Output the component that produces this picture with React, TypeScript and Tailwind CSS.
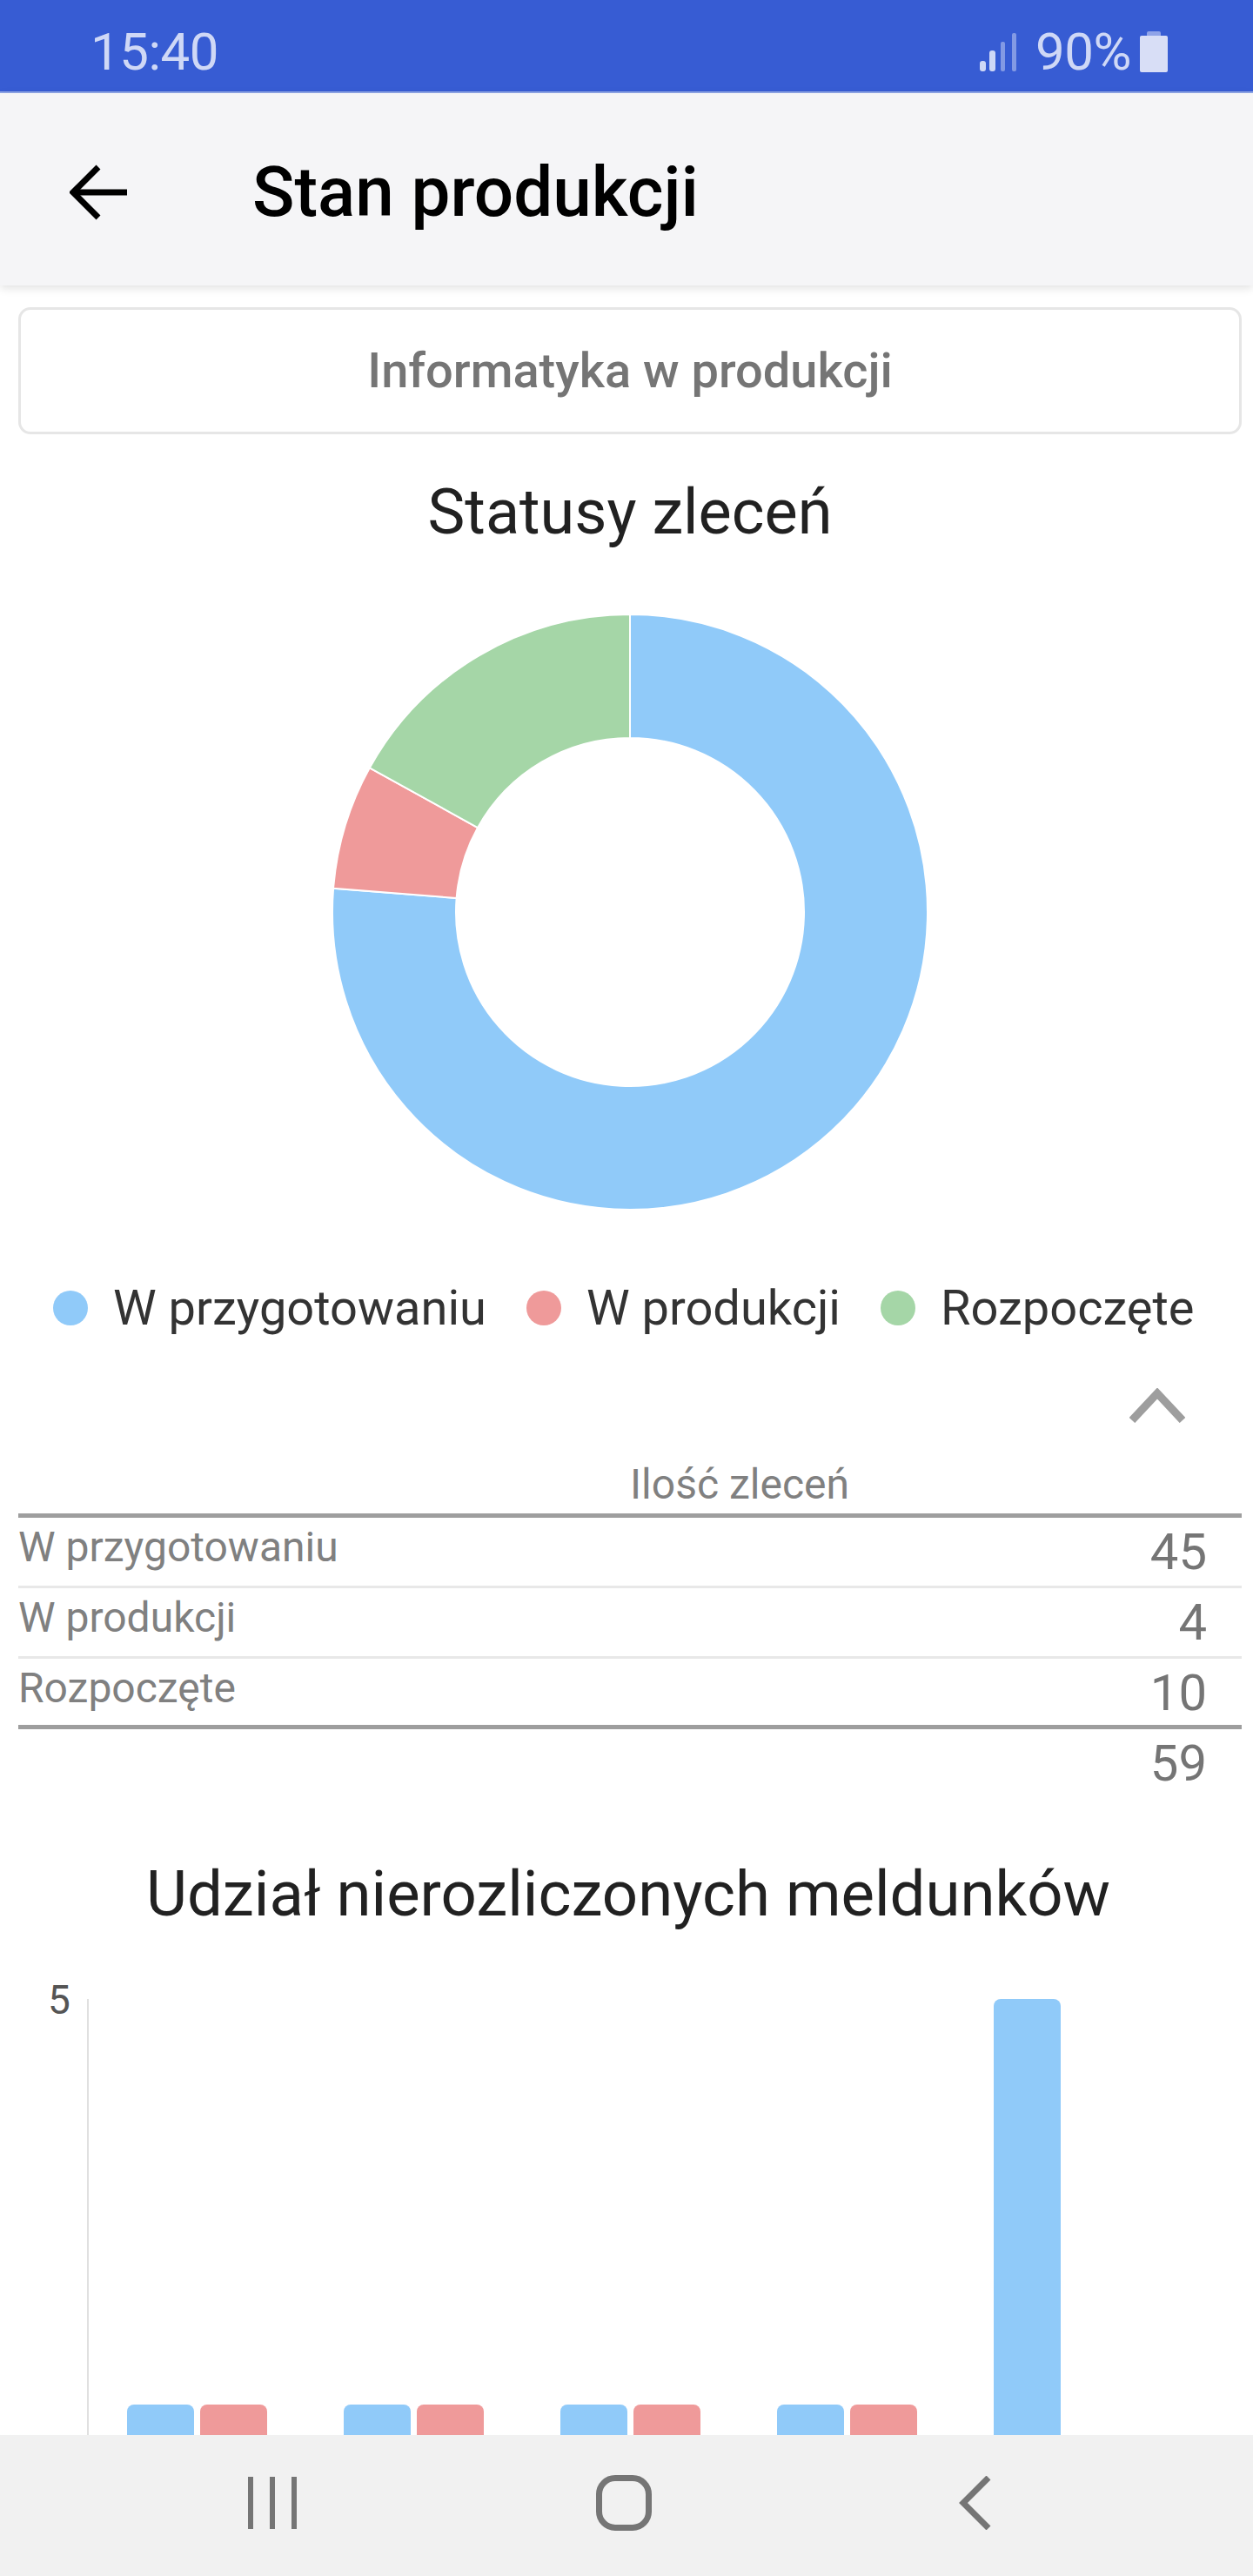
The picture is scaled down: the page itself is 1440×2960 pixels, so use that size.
import React from "react";

const cx = 342;
const cy = 342;
function slice(a0: number, a1: number, R = 342, r = 200) {
  const p = (rad: number, a: number) => {
    const t = (a * Math.PI) / 180;
    return `${(cx + rad * Math.sin(t)).toFixed(2)} ${(cy - rad * Math.cos(t)).toFixed(2)}`;
  };
  const large = a1 - a0 > 180 ? 1 : 0;
  return `M${p(R, a0)}A${R} ${R} 0 ${large} 1 ${p(R, a1)}L${p(r, a1)}A${r} ${r} 0 ${large} 0 ${p(r, a0)}Z`;
}

function Donut() {
  const b = (45 / 59) * 360;
  const rd = (49 / 59) * 360;
  return (
    <svg width="684" height="684" viewBox="0 0 684 684" className="block">
      <path d={slice(0, b)} fill="#90CAF9" stroke="#ffffff" strokeWidth="2" />
      <path d={slice(b, rd)} fill="#EF9A9A" stroke="#ffffff" strokeWidth="2" />
      <path d={slice(rd, 360)} fill="#A5D6A7" stroke="#ffffff" strokeWidth="2" />
    </svg>
  );
}

function LegendItem({ color, label }: { color: string; label: string }) {
  return (
    <div className="flex items-center">
      <span className={`w-[40px] h-[40px] rounded-full mr-[29px] ${color}`} />
      <span className="text-[56px] leading-[70px] text-[#333333]">{label}</span>
    </div>
  );
}

function Row({ label, value, border }: { label: string; value: string; border: string }) {
  return (
    <div className={`h-[81px] flex justify-between ${border}`}>
      <span className="text-[48px] leading-[68px] text-[#808080]">{label}</span>
      <span className="text-[58px] leading-[78px] pr-[40px] text-[#757575]">{value}</span>
    </div>
  );
}

function BarPair({ single }: { single?: boolean }) {
  if (single) {
    return (
      <div className="w-[161px] flex items-end">
        <div className="w-[77px] h-[502px] bg-[#90CAF9] rounded-t-[8px]" />
      </div>
    );
  }
  return (
    <div className="w-[161px] flex items-end justify-between">
      <div className="w-[77px] h-[36px] bg-[#90CAF9] rounded-t-[8px]" />
      <div className="w-[77px] h-[36px] bg-[#EF9A9A] rounded-t-[8px]" />
    </div>
  );
}

export default function App() {
  return (
    <div className="w-[1440px] h-[2960px] overflow-hidden flex flex-col bg-white [font-family:Roboto,sans-serif]">
      <div className="h-[107px] shrink-0 bg-[#375CD3] border-b-2 border-[#8fa6e8] flex items-center justify-between pt-[14px] pl-[104px] pr-[97px] text-[#cfd8f6]">
        <span className="text-[60px] leading-none tracking-[-0.5px]">15:40</span>
        <div className="flex items-center">
          <svg width="50" height="48" viewBox="0 0 50 48" className="mr-[14px]" fill="currentColor">
            <rect x="0" y="34" width="7" height="12" rx="3" />
            <rect x="11" y="22" width="7" height="24" rx="3" />
            <rect x="24" y="12" width="5" height="34" rx="2" opacity="0.5" />
            <rect x="37" y="2" width="5" height="44" rx="2" opacity="0.5" />
          </svg>
          <span className="text-[60px] leading-none tracking-[-0.5px]">90%</span>
          <svg width="34" height="48" viewBox="0 0 34 48" className="ml-[9px]">
            <rect x="9" y="0" width="16" height="8" rx="2" fill="#8fa3e8" />
            <path d="M3 5h28a2 2 0 0 1 2 2v38a2 2 0 0 1-2 2H3a2 2 0 0 1-2-2V7a2 2 0 0 1 2-2z" fill="#d8def6" />
          </svg>
        </div>
      </div>

      <div className="h-[221px] shrink-0 bg-[#F5F5F7] shadow-[0_3px_10px_rgba(0,0,0,0.12)] relative flex items-center pt-[6px] pl-[80px]">
        <svg width="68" height="64" viewBox="0 0 68 64" fill="none" stroke="#000000" strokeWidth="7">
          <path d="M4 32H66" />
          <path d="M33 3L4 32l29 29" />
        </svg>
        <span className="ml-[142px] text-[80px] leading-none font-medium text-black">Stan produkcji</span>
      </div>

      <div className="flex-1 min-h-0 overflow-hidden pl-[21px] pr-[13px] pt-[25px]">
        <div className="h-[146px] border-[3px] border-[#e6e6e6] rounded-[14px] flex items-center justify-center text-[56px] font-medium text-[#757575]">
          Informatyka w produkcji
        </div>

        <div className="mt-[45px] text-center text-[72px] leading-[90px] text-[#212121]">Statusy zleceń</div>

        <div className="mt-[72px] flex justify-center pl-[4px] pr-[4px]">
          <Donut />
        </div>

        <div className="mt-[78px] flex gap-[46px] pl-[40px]">
          <LegendItem color="bg-[#90CAF9]" label="W przygotowaniu" />
          <LegendItem color="bg-[#EF9A9A]" label="W produkcji" />
          <LegendItem color="bg-[#A5D6A7]" label="Rozpoczęte" />
        </div>

        <div className="mt-[57px] flex justify-end pr-[65px]">
          <svg width="64" height="40" viewBox="0 0 64 40" fill="none" stroke="#9E9E9E" strokeWidth="9">
            <path d="M3 37L32 6l29 31" />
          </svg>
        </div>

        <div className="mt-[38px] h-[66px] border-b-[5px] border-[#9E9E9E] box-content">
          <div className="text-center pl-[252px] text-[48px] leading-[66px] text-[#808080]">Ilość zleceń</div>
        </div>
        <Row label="W przygotowaniu" value="45" border="border-b-[3px] border-[#E8E8E8]" />
        <Row label="W produkcji" value="4" border="border-b-[3px] border-[#E8E8E8]" />
        <Row label="Rozpoczęte" value="10" border="border-b-[5px] border-[#9E9E9E]" />
        <div className="flex justify-end">
          <span className="text-[58px] leading-[78px] pr-[40px] text-[#757575]">59</span>
        </div>

        <div className="mt-[67px] pr-[4px] text-center text-[72.5px] leading-[90px] text-[#212121]">
          Udział nierozliczonych meldunków
        </div>

        <div className="mt-[75px] flex h-[502px]">
          <div className="w-[58px] pl-[34px] text-[46px] leading-none text-[#555555] -mt-[22px]">5</div>
          <div className="w-[21px]" />
          <div className="border-l-2 border-[#E0E0E0] pl-[44px] flex items-end gap-[88px]">
            <BarPair />
            <BarPair />
            <BarPair />
            <BarPair />
            <BarPair single />
          </div>
        </div>
      </div>

      <div className="h-[162px] shrink-0 bg-[#F1F1F1] flex items-center pb-[6px]">
        <div className="ml-[285px] flex gap-[19px]">
          <span className="w-[6px] h-[60px] bg-[#757575]" />
          <span className="w-[6px] h-[60px] bg-[#757575]" />
          <span className="w-[6px] h-[60px] bg-[#757575]" />
        </div>
        <div className="ml-[344px] w-[64px] h-[64px] border-[7px] border-[#757575] rounded-[22px]" />
        <svg width="40" height="62" viewBox="0 0 40 62" fill="none" stroke="#757575" strokeWidth="7" className="ml-[352px]">
          <path d="M35 2L6 31l29 29" />
        </svg>
      </div>
    </div>
  );
}
